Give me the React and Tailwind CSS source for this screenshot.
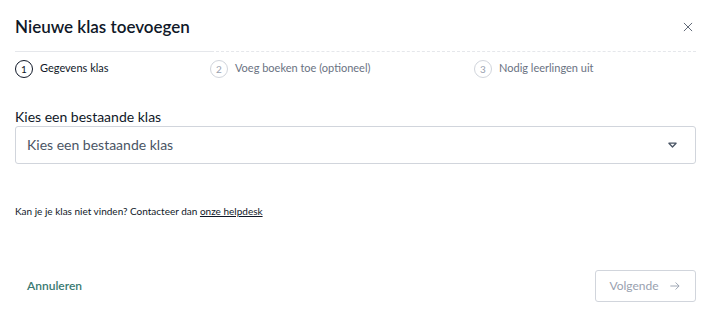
function Step({ n, label, active, className }) {
  return (
    <div className={`flex items-center gap-[7px] ${className}`}>
      <div
        className={`w-[18px] h-[18px] rounded-full border flex items-center justify-center text-[10px] leading-none ${
          active ? 'border-gray-900 text-gray-900 border-[1.5px]' : 'border-gray-300 text-gray-400'
        }`}
      >
        {n}
      </div>
      <span className={`text-[11px] ${active ? 'text-gray-900' : 'text-gray-500'}`}>{label}</span>
    </div>
  )
}

export default function App() {
  return (
    <div className="w-[709px] h-[313px] bg-white font-['Lato',sans-serif] text-gray-900 flex flex-col pl-[15px] pr-[13px] pt-[14px] pb-[11px]">
      <div className="flex items-center justify-between">
        <h1 className="text-[17px] font-semibold">Nieuwe klas toevoegen</h1>
        <svg viewBox="0 0 24 24" fill="none" stroke="currentColor" strokeWidth="1.5" className="w-[14px] h-[14px] text-gray-600 mr-[1px]">
          <line x1="19" y1="5" x2="5" y2="19" /><line x1="5" y1="5" x2="19" y2="19" />
        </svg>
      </div>

      <div className="flex mt-[11px]">
        <div className="w-[196px] border-t border-gray-200" />
        <div className="flex-1 border-t border-dashed border-gray-200" />
      </div>

      <div className="flex mt-[8px]">
        <Step n="1" label="Gegevens klas" active className="w-[195px]" />
        <Step n="2" label="Voeg boeken toe (optioneel)" className="w-[264px]" />
        <Step n="3" label="Nodig leerlingen uit" />
      </div>

      <label className="text-[14px] mt-[30px] leading-[18px]">Kies een bestaande klas</label>
      <div className="h-[38px] border border-gray-300 rounded-[3px] flex items-center justify-between pl-[11px] pr-[18px]">
        <span className="text-[14px] text-gray-600">Kies een bestaande klas</span>
        <svg viewBox="0 0 10 6" className="w-[9px] h-[6px] text-gray-600">
          <path d="M1 1h8L5 5.2z" fill="none" stroke="currentColor" strokeWidth="1.4" strokeLinejoin="round" />
        </svg>
      </div>

      <p className="text-[10px] mt-[40px]">
        Kan je je klas niet vinden? Contacteer dan <span className="underline">onze helpdesk</span>
      </p>

      <div className="mt-auto flex items-center justify-between">
        <button className="ml-[12px] text-[12px] font-semibold text-[#3a7a72]">Annuleren</button>
        <button className="w-[101px] h-[32px] border border-gray-300 rounded-[3px] flex items-center justify-center gap-[9px] text-[12px] text-gray-400">
          Volgende
          <svg viewBox="0 0 24 24" fill="none" stroke="currentColor" strokeWidth="1.6" className="w-[14px] h-[14px]">
            <line x1="4" y1="12" x2="19" y2="12" /><polyline points="13 6 19 12 13 18" />
          </svg>
        </button>
      </div>
    </div>
  )
}
